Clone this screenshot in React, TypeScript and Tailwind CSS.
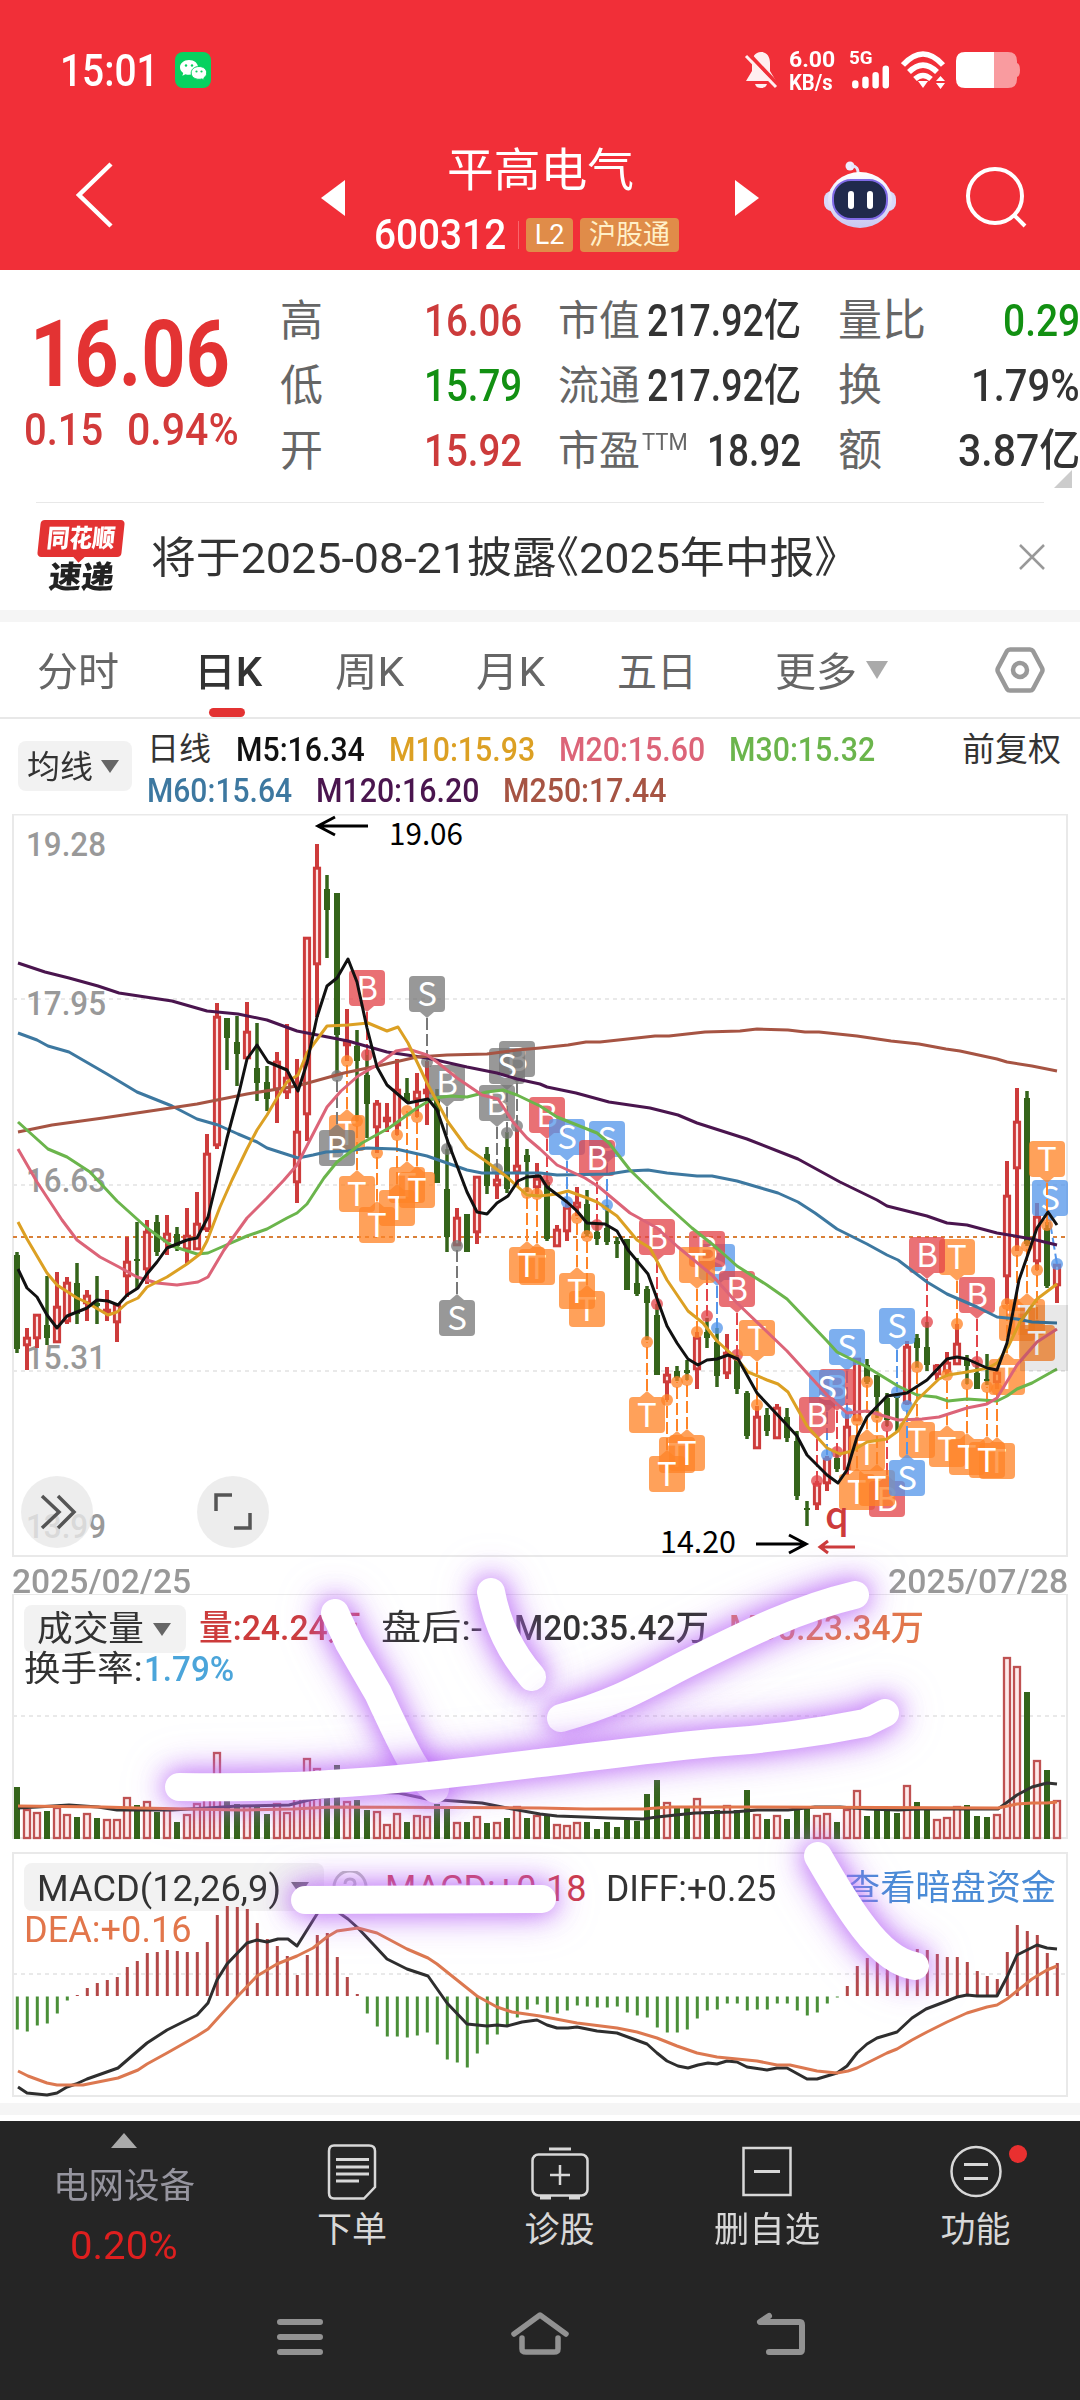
import { useLayoutEffect, useRef, type ReactNode } from "react"
import clsx from "clsx"

type Candle = [up: number, high: number, top: number, bottom: number, low: number]
type Marker = [text: string, color: string, x: number, y: number, dotY: number, dotX?: number]

const RED = "#cd3b3b"
const GREEN = "#34641a"
const PINK = "#e34449"
const BLUE = "#5596ea"
const GRAY = "#787878"
const ORANGE = "#ff8427"

const candles: Candle[] = [
  [0, 1252, 1255, 1349, 1353], [1, 1328, 1337, 1346, 1370], [1, 1314, 1314, 1339, 1348], [0, 1276, 1325, 1338, 1345],
  [1, 1272, 1306, 1343, 1343], [1, 1277, 1282, 1322, 1324], [0, 1263, 1283, 1314, 1324], [1, 1290, 1295, 1304, 1321],
  [0, 1276, 1303, 1306, 1324], [1, 1290, 1309, 1313, 1321], [1, 1304, 1304, 1323, 1342], [1, 1237, 1261, 1277, 1297],
  [0, 1222, 1259, 1261, 1288], [1, 1220, 1231, 1270, 1284], [0, 1215, 1222, 1252, 1256], [1, 1215, 1233, 1242, 1255],
  [0, 1227, 1234, 1246, 1251], [1, 1208, 1235, 1250, 1264], [1, 1192, 1223, 1250, 1250], [1, 1134, 1153, 1230, 1232],
  [1, 1003, 1016, 1146, 1149], [0, 1018, 1018, 1038, 1070], [0, 1016, 1042, 1054, 1086], [1, 1002, 1031, 1059, 1059],
  [0, 1023, 1068, 1083, 1101], [0, 1066, 1082, 1099, 1111], [1, 1052, 1061, 1090, 1123], [1, 1024, 1077, 1093, 1099],
  [1, 1059, 1131, 1183, 1203], [1, 937, 937, 1115, 1141], [1, 844, 867, 965, 1017], [0, 875, 889, 910, 958],
  [0, 893, 893, 1035, 1076], [1, 1009, 1041, 1046, 1061], [0, 1030, 1046, 1061, 1121], [0, 1050, 1075, 1104, 1138],
  [1, 1100, 1103, 1128, 1153], [1, 1103, 1117, 1122, 1132], [1, 1059, 1089, 1126, 1135], [0, 1078, 1093, 1101, 1103],
  [1, 1073, 1091, 1100, 1117], [1, 1061, 1089, 1094, 1125], [0, 1089, 1099, 1183, 1183], [0, 1149, 1189, 1237, 1252],
  [1, 1208, 1217, 1246, 1246], [0, 1214, 1214, 1252, 1252], [1, 1176, 1176, 1233, 1244], [0, 1147, 1154, 1186, 1194],
  [1, 1174, 1179, 1186, 1199], [0, 1132, 1147, 1189, 1193], [1, 1126, 1165, 1173, 1186], [0, 1149, 1155, 1162, 1192],
  [1, 1163, 1178, 1188, 1194], [0, 1180, 1182, 1239, 1241], [1, 1225, 1229, 1247, 1247], [1, 1202, 1207, 1232, 1241],
  [1, 1187, 1202, 1208, 1216], [0, 1190, 1204, 1234, 1237], [0, 1225, 1232, 1239, 1245], [0, 1205, 1228, 1242, 1245],
  [0, 1237, 1241, 1244, 1258], [0, 1239, 1239, 1290, 1290], [0, 1258, 1283, 1294, 1296], [0, 1286, 1289, 1303, 1340],
  [0, 1304, 1315, 1375, 1375], [1, 1367, 1374, 1383, 1400], [0, 1366, 1371, 1378, 1381], [0, 1360, 1370, 1373, 1380],
  [1, 1332, 1337, 1370, 1389], [0, 1318, 1332, 1338, 1348], [0, 1328, 1342, 1376, 1387], [1, 1334, 1352, 1374, 1379],
  [0, 1355, 1360, 1389, 1394], [0, 1391, 1393, 1436, 1439], [1, 1406, 1416, 1449, 1449], [0, 1408, 1415, 1431, 1436],
  [1, 1404, 1407, 1439, 1439], [0, 1408, 1417, 1438, 1442], [0, 1431, 1441, 1496, 1500], [0, 1501, 1508, 1510, 1526],
  [1, 1481, 1483, 1505, 1510], [1, 1456, 1458, 1484, 1491], [0, 1452, 1458, 1469, 1472], [1, 1413, 1426, 1470, 1475],
  [1, 1358, 1358, 1421, 1421], [0, 1359, 1365, 1382, 1384], [0, 1375, 1375, 1397, 1418], [0, 1393, 1398, 1420, 1426],
  [0, 1393, 1394, 1398, 1431], [1, 1341, 1346, 1404, 1405], [0, 1334, 1338, 1348, 1368], [0, 1322, 1347, 1365, 1371],
  [1, 1364, 1365, 1375, 1380], [1, 1352, 1362, 1372, 1375], [1, 1324, 1343, 1365, 1365], [0, 1355, 1360, 1366, 1384],
  [0, 1360, 1373, 1389, 1389], [0, 1354, 1379, 1381, 1385], [1, 1370, 1372, 1383, 1389], [1, 1161, 1195, 1277, 1304],
  [1, 1088, 1121, 1169, 1251], [0, 1091, 1098, 1244, 1246], [1, 1203, 1216, 1262, 1270], [0, 1222, 1228, 1286, 1288],
  [1, 1264, 1264, 1286, 1303],
]

const volumes = [
  52, 30, 27, 28, 32, 25, 22, 26, 21, 20, 20, 42, 34, 38, 27, 30, 17, 25, 36, 46, 87, 40, 35, 34, 33, 25, 36, 27, 46, 81,
  71, 49, 74, 38, 39, 29, 28, 15, 26, 17, 24, 23, 35, 33, 17, 17, 23, 16, 17, 21, 33, 21, 24, 24, 15, 14, 17, 17, 10, 17,
  12, 19, 18, 45, 59, 37, 32, 33, 41, 28, 29, 34, 29, 49, 25, 20, 24, 20, 30, 30, 24, 26, 17, 30, 49, 23, 30, 30, 26, 54,
  37, 31, 20, 22, 33, 34, 23, 22, 25, 182, 173, 147, 79, 69, 39,
]

const macd = [
  -33, -35, -29, -27, -17, -4, 1, 8, 13, 16, 19, 29, 35, 43, 44, 46, 45, 44, 44, 54, 81, 90, 89, 87, 73, 57, 50, 40, 21,
  41, 61, 63, 39, 19, 2, -17, -30, -40, -40, -41, -39, -36, -48, -63, -66, -71, -57, -48, -38, -29, -21, -13, -8, -16,
  -17, -14, -9, -10, -11, -11, -10, -16, -19, -21, -31, -36, -36, -33, -22, -14, -13, -7, -7, -14, -13, -13, -7, -7, -14,
  -19, -16, -7, -1, 10, 30, 38, 42, 43, 45, 46, 47, 46, 42, 39, 39, 34, 25, 20, 17, 44, 71, 65, 61, 43, 33,
]

const averages: [color: string, points: string][] = [
  ["#4a154e", "18,963 45,972 69,978 98,986 119,993 172,1001 207,1011 238,1014 267,1020 297,1031 348,1041 387,1052 427,1058 467,1067 497,1073 517,1079 540,1084 547,1087 576,1093 609,1102 650,1108 678,1115 697,1123 747,1139 798,1159 840,1182 877,1200 887,1206 927,1216 947,1223 967,1225 997,1233 1032,1239 1057,1245"],
  ["#3d78a0", "18,1033 37,1040 48,1046 69,1052 107,1074 137,1092 172,1106 197,1119 218,1125 238,1134 257,1142 267,1148 298,1158 313,1155 326,1152 348,1151 367,1148 396,1149 427,1156 467,1170 482,1173 540,1173 557,1175 609,1174 628,1171 648,1170 667,1173 697,1176 712,1176 737,1181 778,1193 798,1202 815,1213 837,1229 867,1244 887,1255 898,1260 927,1282 947,1294 977,1307 997,1317 1017,1319 1032,1322 1057,1323"],
  ["#a65443", "18,1132 52,1125 103,1118 157,1110 197,1104 247,1094 297,1086 344,1073 382,1065 417,1057 447,1055 487,1054 517,1050 540,1048 568,1045 586,1042 600,1042 655,1036 669,1036 705,1032 740,1031 757,1029 788,1030 805,1032 819,1032 857,1036 891,1041 919,1044 946,1049 960,1051 997,1059 1007,1062 1032,1066 1057,1071"],
  ["#6bb54c", "18,1122 48,1149 67,1157 90,1172 117,1201 147,1228 172,1246 197,1254 208,1253 224,1246 247,1236 267,1229 287,1218 297,1213 307,1204 324,1178 337,1162 362,1143 389,1128 417,1108 434,1098 451,1096 467,1097 487,1092 503,1090 517,1095 540,1106 557,1117 597,1133 609,1143 630,1170 662,1201 692,1228 717,1248 737,1266 767,1285 787,1299 827,1341 837,1352 867,1367 898,1386 917,1395 936,1397 948,1401 967,1399 997,1401 1007,1396 1017,1389 1032,1383 1057,1369"],
  ["#dc6478", "18,1149 37,1182 62,1220 77,1240 100,1257 119,1267 137,1277 157,1283 177,1285 198,1282 208,1277 224,1250 247,1218 267,1198 284,1180 297,1165 327,1107 341,1091 358,1076 377,1065 396,1051 408,1049 427,1055 437,1062 457,1078 482,1095 498,1099 513,1122 527,1138 540,1149 557,1165 585,1178 599,1187 630,1213 657,1228 678,1247 712,1275 737,1303 787,1351 827,1395 847,1413 867,1411 898,1420 922,1419 939,1417 967,1408 987,1404 997,1398 1017,1365 1037,1342 1057,1329"],
  ["#dca023", "18,1222 27,1239 47,1273 57,1285 77,1298 86,1302 108,1315 117,1312 127,1303 138,1298 147,1287 167,1277 187,1264 200,1254 207,1241 220,1207 232,1180 247,1149 257,1130 267,1115 277,1098 287,1082 298,1075 307,1053 327,1026 348,1025 368,1023 387,1031 398,1027 408,1043 427,1083 448,1122 467,1148 487,1162 507,1177 527,1195 540,1196 557,1194 568,1191 587,1198 597,1202 617,1216 637,1240 650,1248 667,1280 688,1311 703,1323 717,1341 737,1359 748,1372 767,1380 778,1384 788,1392 807,1426 827,1448 840,1454 852,1451 867,1442 887,1439 898,1431 917,1400 939,1379 948,1375 967,1372 988,1368 997,1363 1008,1347 1020,1322 1037,1299 1057,1284"],
  ["#111111", "18,1269 27,1288 37,1297 47,1315 57,1328 67,1316 87,1308 97,1300 108,1301 118,1305 127,1295 138,1288 147,1274 157,1262 167,1248 187,1240 197,1238 208,1217 217,1180 227,1138 238,1097 247,1059 257,1045 268,1062 287,1070 298,1091 307,1063 317,1017 327,986 337,978 348,959 357,982 367,1028 377,1067 387,1085 408,1103 428,1099 437,1110 448,1142 467,1192 477,1212 487,1214 497,1203 508,1196 518,1181 527,1177 540,1176 547,1187 567,1202 577,1211 587,1223 605,1224 617,1231 628,1250 648,1274 667,1326 677,1343 688,1359 698,1365 707,1360 717,1359 728,1355 738,1359 757,1393 787,1425 797,1436 807,1455 827,1475 838,1483 847,1470 857,1437 867,1417 887,1396 907,1393 927,1380 947,1359 957,1357 967,1359 987,1368 997,1370 1007,1343 1019,1280 1027,1257 1037,1228 1048,1212 1057,1225"],
]

const markers: Marker[] = [
  ["B", PINK, 367, 988, 1055], ["S", GRAY, 427, 994, 1062], ["B", GRAY, 447, 1083, 1149],
  ["B", GRAY, 517, 1059, 1126], ["S", GRAY, 507, 1066, 1133], ["B", GRAY, 497, 1103, 1169],
  ["T", ORANGE, 347, 1133, 1061], ["B", GRAY, 337, 1148, 1076], ["T", ORANGE, 357, 1194, 1121],
  ["T", ORANGE, 407, 1185, 1111], ["T", ORANGE, 397, 1208, 1135], ["T", ORANGE, 417, 1190, 1117],
  ["T", ORANGE, 377, 1225, 1153], ["S", GRAY, 457, 1318, 1246], ["T", ORANGE, 537, 1267, 1194],
  ["T", ORANGE, 527, 1265, 1193], ["B", PINK, 547, 1115, 1180], ["S", BLUE, 567, 1137, 1202],
  ["S", BLUE, 607, 1139, 1205], ["B", PINK, 597, 1158, 1225], ["T", ORANGE, 587, 1309, 1236],
  ["T", ORANGE, 577, 1291, 1218], ["B", PINK, 657, 1237, 1304], ["T", ORANGE, 647, 1415, 1342],
  ["T", ORANGE, 677, 1455, 1382], ["T", ORANGE, 687, 1453, 1380], ["T", ORANGE, 667, 1474, 1400],
  ["S", BLUE, 717, 1262, 1328], ["B", PINK, 707, 1249, 1316], ["T", ORANGE, 697, 1265, 1332],
  ["B", PINK, 737, 1289, 1355], ["T", ORANGE, 757, 1338, 1405], ["S", BLUE, 847, 1347, 1413],
  ["B", PINK, 837, 1387, 1452], ["S", BLUE, 827, 1388, 1455], ["B", PINK, 817, 1415, 1481],
  ["S", BLUE, 897, 1326, 1392], ["T", ORANGE, 867, 1453, 1382], ["T", ORANGE, 857, 1492, 1420],
  ["B", PINK, 887, 1499, 1426], ["T", ORANGE, 877, 1488, 1417], ["T", ORANGE, 917, 1440, 1367],
  ["S", BLUE, 907, 1478, 1406], ["T", ORANGE, 947, 1449, 1375], ["T", ORANGE, 967, 1457, 1384],
  ["T", ORANGE, 997, 1461, 1389], ["T", ORANGE, 987, 1460, 1387], ["T", ORANGE, 957, 1257, 1324],
  ["B", PINK, 927, 1255, 1322], ["B", PINK, 977, 1295, 1362], ["T", ORANGE, 1007, 1377, 1304],
  ["T", ORANGE, 1017, 1323, 1251], ["T", ORANGE, 1027, 1317, 1246], ["T", ORANGE, 1037, 1343, 1270],
  ["S", BLUE, 1050, 1198, 1264, 1057], ["T", ORANGE, 1047, 1159, 1225],
]

// Freehand strokes over the lower charts
const strokes = [
  "M335 1613 L349 1643 L378 1693 Q402 1745 412 1762 Q424 1782 435 1789",
  "M491 1592 Q500 1640 532 1677",
  "M561 1718 C620 1702 650 1682 690 1662 C750 1632 800 1608 855 1595",
  "M179 1787 Q280 1788 330 1784 C400 1780 440 1775 540 1763 C600 1756 640 1750 712 1743 Q790 1738 865 1723 L885 1713",
  "M305 1900 L542 1899",
  "M818 1856 Q846 1905 864 1928 Q890 1962 915 1966",
]

// Squeezes a run of text into a given width
function Fit({ w, className, children }: { w: number; className?: string; children: ReactNode }) {
  const ref = useRef<HTMLSpanElement>(null)
  useLayoutEffect(() => {
    const el = ref.current
    if (el) el.style.transform = `scaleX(${w / el.offsetWidth})`
  }, [w])
  return (
    <span className={clsx("block shrink-0 whitespace-nowrap", className)} style={{ width: w }}>
      <span ref={ref} className="inline-block origin-left whitespace-pre">{children}</span>
    </span>
  )
}

function Caret({ className }: { className?: string }) {
  return (
    <svg viewBox="0 0 18 13" className={clsx("h-[13px] w-[18px] shrink-0", className)}>
      <path d="M0 0H18L9 13Z" fill="currentColor" />
    </svg>
  )
}

function StatusBar() {
  return (
    <div className="flex h-[140px] items-center pr-[60px] pl-[60px] text-white">
      <Fit w={99} className="pt-[2px] text-[44px] font-medium">15:01</Fit>
      <svg viewBox="0 0 36 36" className="ml-4 size-9">
        <rect width="36" height="36" rx="8" fill="#07d160" />
        <path d="M14 8c-5.2 0-9 3.300-9 7.300 0 2.400 1.200 4.300 3.200 5.700l-.8 2.700 3-1.500c1.200.4 2.400.5 3.600.5 5.200 0 9-3.300 9-7.400S19.200 8 14 8Z" fill="#fff" />
        <path d="M24 14.500c-4.500 0-7.800 2.800-7.800 6.400s3.300 6.400 7.800 6.400c1 0 2-.1 2.900-.4l2.500 1.300-.6-2.300c1.800-1.200 2.900-3 2.900-5 0-3.600-3.200-6.400-7.700-6.400Z" fill="#fff" stroke="#07d160" />
        <g fill="#07d160">
          <circle cx="11" cy="13.500" r="1.200" /><circle cx="17" cy="13.500" r="1.200" />
          <circle cx="21.500" cy="19.500" r="1.100" /><circle cx="26.500" cy="19.500" r="1.100" />
        </g>
      </svg>
      <svg viewBox="0 0 34 38" className="ml-auto h-[38px] w-[34px]">
        <path d="M17 1c-6 0-9 5-9 11v8L2 30h30l-6-10v-8c0-6-3-11-9-11ZM11 33h12c-1 3-3 4-6 4s-5-1-6-4Z" fill="#ffeff0" />
        <path d="M3 1 34 34" stroke="#f12f38" strokeWidth="4" />
        <path d="M2 5 32 36" stroke="#ffeff0" strokeWidth="3" />
      </svg>
      <div className="ml-[11px] pt-[2px] text-[22px] leading-[23px] font-bold">
        <Fit w={46}>6.00</Fit>
        <Fit w={44}>KB/s</Fit>
      </div>
      <div className="ml-[14px] flex h-[38px] w-[44px] flex-col justify-between">
        <Fit w={24} className="text-[18px] leading-[14px] font-bold">5G</Fit>
        <svg viewBox="0 0 44 26" className="h-[26px] w-[44px]" stroke="#fff" strokeWidth="7" strokeLinecap="round">
          <path d="M5 22V20M16 22V16M27 22V11M38 22V4" />
        </svg>
      </div>
      <svg viewBox="0 0 46 38" className="ml-[8px] h-[38px] w-[46px]" fill="none" stroke="#fff" strokeWidth="5.500">
        <path d="M2 14Q22-8 42 14M8 21Q22 7 36 21M14 28Q22 21 30 28" />
        <path d="M17 30H27L22 37Z" fill="#fff" stroke="none" />
        <path d="M35 30 39.500 25 44 30ZM35 32H44L39.500 38Z" fill="#fff" stroke="none" />
      </svg>
      <svg viewBox="0 0 64 36" className="ml-[9px] h-9 w-16">
        <path d="M38 0H52Q61 0 61 9V11Q64 12 64 18T61 25V27Q61 36 52 36H38Z" fill="#f99b9f" />
        <path d="M38 0H9Q0 0 0 9V27Q0 36 9 36H38Z" fill="#fff" />
      </svg>
    </div>
  )
}

function TitleBar() {
  return (
    <div className="flex h-[130px] items-start text-white">
      <svg viewBox="0 0 40 70" className="mt-5 ml-[75px] h-[70px] w-10" fill="none" stroke="#fff" strokeWidth="4.500">
        <path d="M36 4 4 35 36 66" />
      </svg>
      <svg viewBox="0 0 24 36" className="mt-10 ml-[206px] h-9 w-6"><path d="M24 0V36L0 18Z" fill="#fff" /></svg>
      <div className="ml-[29px] flex w-[306px] flex-col">
        <Fit w={187} className="mt-[3px] ml-[73px] text-[46px] leading-[54px]">平高电气</Fit>
        <div className="mt-[19px] flex items-center">
          <Fit w={132} className="text-[42px] leading-[38px] font-medium">600312</Fit>
          <div className="ml-3 h-7 w-px bg-[#f8666c]" />
          <div className="ml-[7px] flex h-[34px] w-[47px] justify-center rounded-[4px] bg-[#e08c49] text-[27px] leading-[34px]">L2</div>
          <div className="ml-[7px] flex h-[34px] w-[99px] justify-center rounded-[4px] bg-[#e08c49] text-[27px] leading-[34px] text-[#fff0c8]">沪股通</div>
        </div>
      </div>
      <svg viewBox="0 0 24 36" className="mt-10 ml-[55px] h-9 w-6"><path d="M0 0V36L24 18Z" fill="#fff" /></svg>
      <svg viewBox="0 0 72 70" className="mt-[20px] ml-[65px] h-[70px] w-[72px]">
        <defs>
          <linearGradient id="shell" x1="0" y1="0" x2="0" y2="1">
            <stop offset="0" stopColor="#fff" />
            <stop offset="1" stopColor="#c9c8f2" />
          </linearGradient>
        </defs>
        <circle cx="26" cy="6" r="4.500" fill="#eef" />
        <path d="M27 6Q35 5 34 16" fill="none" stroke="#e4e6fb" strokeWidth="3" />
        <rect x="0" y="31" width="72" height="20" rx="8" fill="#d9d9fa" />
        <ellipse cx="36" cy="40" rx="32" ry="28" fill="url(#shell)" />
        <rect x="9" y="20" width="54" height="39" rx="18" fill="#202a4c" stroke="#7f6ae6" strokeWidth="2" />
        <path d="M27 34V46M46 34V46" stroke="#fff" strokeWidth="6" strokeLinecap="round" />
      </svg>
      <svg viewBox="0 0 62 62" className="mt-[27px] ml-[69px] size-[62px]" fill="none" stroke="#fff" strokeWidth="4">
        <circle cx="30" cy="29" r="27" />
        <path d="M49 48 60 59" />
      </svg>
    </div>
  )
}

const quoteRows = [
  { a: "高", av: "16.06", up: true, b: "市值", bv: "217.92亿", c: "量比", cv: "0.29", cw: 77 },
  { a: "低", av: "15.79", up: false, b: "流通", bv: "217.92亿", c: "换", cv: "1.79%", cw: 109 },
  { a: "开", av: "15.92", up: true, b: "市盈", bv: "18.92", c: "额", cv: "3.87亿", cw: 122 },
]

function Quote() {
  return (
    <div className="relative flex h-[232px] bg-white">
      <div className="w-[280px] shrink-0">
        <Fit w={200} className="mt-[34px] ml-[30px] text-[92px] leading-[102px] font-bold text-[#e33333]">16.06</Fit>
        <div className="mt-[4px] flex pl-6 text-[44px] leading-[40px] font-medium text-[#d23a3a]">
          <Fit w={79}>0.15</Fit>
          <Fit w={112} className="ml-6">0.94%</Fit>
        </div>
      </div>
      <div className="flex flex-1 flex-col pt-[19px] text-[44px] leading-[65px] text-[#333]">
        {quoteRows.map((r) => (
          <div key={r.a} className="flex h-[65px]">
            <span className="w-[144px] shrink-0 text-[43px] text-[#666]">{r.a}</span>
            <Fit w={98} className={clsx("font-medium", r.up ? "text-[#cc3b3b]" : "text-[#129012]")}>{r.av}</Fit>
            <span className="ml-[36px] flex w-[243px] justify-between">
              <span className="flex text-[41px] text-[#666]">
                {r.b}
                {r.b === "市盈" && <Fit w={46} className="-mt-[9px] ml-[2px] text-[23px]">TTM</Fit>}
              </span>
              <Fit w={r.b === "市盈" ? 94 : 154} className="font-medium">{r.bv}</Fit>
            </span>
            <span className="ml-[37px] text-[#666]">{r.c}</span>
            <Fit w={r.cw} className={clsx("ml-auto font-medium", r.cv === "0.29" && "text-[#129012]")}>{r.cv}</Fit>
          </div>
        ))}
      </div>
      <svg viewBox="0 0 18 18" className="absolute right-2 bottom-[14px] size-[18px]"><path d="M18 0V18H0Z" fill="#ccc" /></svg>
    </div>
  )
}

function Notice() {
  return (
    <>
      <div className="mx-9 h-px bg-[#e8e8e8]" />
      <div className="flex h-[107px] items-center bg-white pl-[37px]">
        <div className="flex w-[88px] flex-col items-center">
          <div className="relative flex h-[37px] w-[84px] -skew-x-6 items-center justify-center rounded-[4px] bg-[#e33232]">
            <Fit w={68} className="text-[25px] leading-[30px] font-black text-white">同花顺</Fit>
            <div className="absolute -bottom-[4px] left-[38px] size-2 rotate-45 bg-[#e33232]" />
          </div>
          <Fit w={65} className="mt-[5px] -skew-x-6 text-[31px] leading-[32px] font-black text-[#222]">速递</Fit>
        </div>
        <Fit w={686} className="ml-[26px] pt-[2px] text-[43px] leading-[60px] text-[#333] [font-feature-settings:'halt']">将于2025-08-21披露《2025年中报》</Fit>
        <svg viewBox="0 0 26 26" className="mr-[35px] ml-auto size-[26px]" stroke="#999" strokeWidth="2.500">
          <path d="M1 1 25 25M25 1 1 25" />
        </svg>
      </div>
      <div className="h-3 bg-[#f5f5f5]" />
    </>
  )
}

function Tabs() {
  return (
    <div className="flex h-[97px] border-b-2 border-[#e8e8e8] bg-white pl-[37px] text-[40px] leading-[101px] text-[#666]">
      <Fit w={82}>分时</Fit>
      <div className="relative ml-[75px] font-medium text-[#333]">
        <Fit w={68}>日K</Fit>
        <div className="absolute bottom-0 left-[15px] h-[9px] w-9 rounded-full bg-[#e33232]" />
      </div>
      <Fit w={69} className="ml-[73px]">周K</Fit>
      <Fit w={69} className="ml-[72px]">月K</Fit>
      <Fit w={80} className="ml-[72px]">五日</Fit>
      <Fit w={82} className="ml-[78px]">更多</Fit>
      <svg viewBox="0 0 22 18" className="mt-[39px] ml-[9px] h-[18px] w-[22px]"><path d="M0 0H22L11 18Z" fill="#aaa" /></svg>
      <svg viewBox="0 0 50 46" className="mt-[25px] mr-[35px] ml-auto h-[46px] w-[50px]" fill="none" stroke="#999" strokeWidth="4.500">
        <path d="M15 2.500H35Q37 2.500 38 4L47 21Q48 23 47 25L38 42Q37 43.500 35 43.500H15Q13 43.500 12 42L3 25Q2 23 3 21L12 4Q13 2.500 15 2.500Z" strokeLinejoin="round" />
        <circle cx="25" cy="23" r="7" />
      </svg>
    </div>
  )
}

function AverageLegend() {
  return (
    <div className="flex h-[95px] bg-white pl-[18px] font-medium">
      <div className="mt-[22px] flex h-[50px] w-[114px] items-center rounded-[8px] bg-[#f2f2f2] pl-[9px] text-[32px] font-normal text-[#333]">
        <Fit w={66} className="pt-[2px]">均线</Fit>
        <Caret className="ml-2 text-[#666]" />
      </div>
      <div className="ml-[15px] pt-[10px] text-[34px] leading-[41px]">
        <div className="flex">
          <Fit w={64} className="text-[32px] font-normal text-[#333]">日线</Fit>
          <Fit w={129} className="ml-[25px] text-[#111]">M5:16.34</Fit>
          <Fit w={146} className="ml-[24px] text-[#dca023]">M10:15.93</Fit>
          <Fit w={146} className="ml-[24px] text-[#dc6478]">M20:15.60</Fit>
          <Fit w={146} className="ml-[24px] text-[#6bb54c]">M30:15.32</Fit>
        </div>
        <div className="flex">
          <Fit w={145} className="text-[#3d78a0]">M60:15.64</Fit>
          <Fit w={163} className="ml-[24px] text-[#4a154e]">M120:16.20</Fit>
          <Fit w={163} className="ml-[24px] text-[#a65443]">M250:17.44</Fit>
        </div>
      </div>
      <Fit w={99} className="mr-[19px] ml-auto pt-[10px] text-[33px] leading-[41px] font-normal text-[#333]">前复权</Fit>
    </div>
  )
}

function Frame({ y, h, grid }: { y: number; h: number; grid: number[] }) {
  return (
    <g fill="none" stroke="#e9e9e9" strokeWidth="2">
      <rect x="13" y={y} width="1054" height={h} />
      {grid.map((g) => <path key={g} d={`M13 ${g}H1066`} strokeDasharray="4 4" />)}
    </g>
  )
}

function PriceChart() {
  return (
    <svg viewBox="0 814 1080 744" className="block h-[744px] w-[1080px] bg-white">
      <Frame y={814.5} h={741.5} grid={[999, 1185, 1371]} />
      <path d="M13 1237H1066" stroke="#d98038" strokeWidth="2" strokeDasharray="4 4" />
      <g fill="#999" fontSize="34" fontWeight="500">
        <text x="26" y="856" textLength="80" lengthAdjust="spacingAndGlyphs">19.28</text>
        <text x="26" y="1015" textLength="80" lengthAdjust="spacingAndGlyphs">17.95</text>
        <text x="26" y="1192" textLength="80" lengthAdjust="spacingAndGlyphs">16.63</text>
        <text x="26" y="1369" textLength="80" lengthAdjust="spacingAndGlyphs">15.31</text>
        <text x="26" y="1538" textLength="80" lengthAdjust="spacingAndGlyphs">13.99</text>
      </g>
      {candles.map(([up, high, top, bottom, low], i) => {
        const x = 17 + i * 10
        return up ? (
          <g key={i} stroke={RED} fill="none">
            <path d={`M${x} ${high}V${top}M${x} ${bottom}V${low}`} strokeWidth="4" />
            <rect x={x - 2.600} y={top + 1.200} width="5.200" height={Math.max(bottom - top - 2.400, 1)} strokeWidth="3" fill="#fbe3e3" />
          </g>
        ) : (
          <g key={i} fill={GREEN}>
            <rect x={x - 1.750} y={high} width="3.500" height={low - high} />
            <rect x={x - 3} y={top} width="6" height={bottom - top} />
          </g>
        )
      })}
      {markers.map(([text, color, x, y, dotY, dotX = x], i) => {
        const side = dotY > y ? 1 : -1
        return (
          <g key={i}>
            <path d={`M${x} ${y + side * 24}L${dotX} ${dotY}`} stroke={color} strokeWidth="2" strokeDasharray="12 4" />
            <g fill={color} opacity="0.76">
              <circle cx={dotX} cy={dotY} r="6" />
              <rect x={x - 18} y={y - 18} width="36" height="36" rx="4" />
              <path d={`M${x - 7} ${y + side * 18}H${x + 7}L${x} ${y + side * 24}Z`} />
            </g>
            <text x={x} y={y + 12} fill="#fff" fontSize="33" textAnchor="middle" className="font-['Noto_Sans_CJK_SC']">{text}</text>
          </g>
        )
      })}
      {averages.map(([color, points]) => (
        <polyline key={color} points={points} fill="none" stroke={color} strokeWidth="3" strokeLinejoin="round" />
      ))}
      <rect x="1020" y="1305" width="48" height="66" fill="#000" opacity="0.090" />
      <g fontSize="31" className="font-['Noto_Sans_CJK_SC']">
        <text x="389" y="845" textLength="74" lengthAdjust="spacingAndGlyphs">19.06</text>
        <text x="660" y="1553" textLength="76" lengthAdjust="spacingAndGlyphs">14.20</text>
        <text x="825" y="1529" fontSize="38" fontWeight="500" fill={RED}>q</text>
      </g>
      <g fill="none" stroke="#000" strokeWidth="3">
        <path d="M368 826H318M335 817 318 826 335 835" />
        <path d="M756 1544H806M789 1535 806 1544 789 1553" />
        <path d="M855 1547H820M828 1541 820 1547 828 1553" stroke={RED} />
      </g>
      <g fill="#e8e8e8" fillOpacity="0.800">
        <circle cx="57" cy="1512" r="36" />
        <circle cx="233" cy="1512" r="36" />
      </g>
      <g fill="none" stroke="#555" strokeWidth="3.500">
        <path d="M42 1496 59 1512 42 1528M58 1496 74 1512 58 1528" />
        <path d="M216 1511V1495H232M234 1528H250V1513" />
      </g>
    </svg>
  )
}

function VolumeChart() {
  return (
    <div className="relative">
      <svg viewBox="0 1594 1080 252" className="block h-[252px] w-[1080px]">
        <Frame y={1594} h={244} grid={[1716]} />
        {volumes.map((h, i) => {
          const x = 17 + i * 10
          return candles[i][0] ? (
            <rect key={i} x={x - 3} y={1840 - h} width="6" height={h - 2} fill="#fdeaea" stroke="#bf5252" strokeWidth="2.300" />
          ) : (
            <rect key={i} x={x - 3} y={1839 - h} width="6" height={h} fill={GREEN} />
          )
        })}
        <g fill="none" strokeWidth="3" strokeLinejoin="round">
          <polyline stroke="#333" points="18,1808 37,1807 69,1805 98,1807 117,1810 172,1810 207,1808 238,1806 289,1805 317,1798 362,1792 399,1793 427,1799 482,1803 507,1808 540,1814 557,1816 585,1817 609,1818 643,1819 657,1817 695,1813 733,1812 757,1810 788,1810 815,1807 840,1807 867,1809 898,1810 919,1809 998,1809 1017,1795 1032,1787 1047,1783 1057,1784" />
          <polyline stroke="#e2764b" points="18,1806 103,1807 138,1808 241,1810 293,1809 331,1807 540,1808 585,1809 643,1809 671,1807 747,1807 998,1808 1017,1804 1032,1803 1047,1803 1057,1802" />
        </g>
      </svg>
      <div className="absolute top-[11px] left-6 text-[35px] leading-[48px] font-medium whitespace-nowrap">
        <div className="flex">
          <div className="flex w-[162px] items-center rounded-[8px] bg-[#f2f2f2] pl-[13px] font-normal text-[#333]">
            <Fit w={107} className="pt-[2px] leading-[46px]">成交量</Fit>
            <Caret className="ml-[9px] text-[#666]" />
          </div>
          <Fit w={163} className="ml-[13px] text-[#cc3b3b]">量:24.24万</Fit>
          <Fit w={101} className="ml-[19px] font-normal text-[#333]">盘后:-</Fit>
          <Fit w={195} className="ml-[32px] text-[#333]">M20:35.42万</Fit>
          <Fit w={195} className="ml-[20px] text-[#e2764b]">M60:23.34万</Fit>
        </div>
        <div className="flex leading-[34px]">
          <Fit w={118} className="font-normal text-[#333]">换手率:</Fit>
          <Fit w={90} className="ml-[2px] text-[#4ba5da]">1.79%</Fit>
        </div>
      </div>
    </div>
  )
}

function MacdChart() {
  return (
    <div className="relative mt-[6px]">
      <svg viewBox="0 1852 1080 251" className="relative block h-[251px] w-[1080px]">
        <Frame y={1853} h={243} grid={[1974]} />
        <rect x="24" y="1863" width="300" height="48" rx="8" fill="#f2f2f2" />
        {macd.map((v, i) => (
          <rect key={i} x={15.800 + i * 10} y={v > 0 ? 1996 - v : 1996.500} width="3" height={Math.abs(v)} fill={v > 0 ? "#b34848" : "#4a8f38"} />
        ))}
        <g fill="none" strokeWidth="3" strokeLinejoin="round">
          <polyline stroke="#2e2e2e" points="18,2087 27,2093 47,2095 57,2093 67,2087 76,2084 87,2079 118,2068 147,2043 167,2030 197,2015 208,2003 217,1980 227,1964 247,1943 257,1940 267,1942 278,1939 288,1939 297,1946 317,1914 325,1902 335,1910 348,1919 358,1928 387,1959 407,1969 428,1976 447,2003 467,2024 487,2026 497,2025 507,2026 522,2022 537,2020 547,2025 557,2028 568,2028 577,2027 597,2031 617,2033 647,2044 657,2053 667,2061 678,2066 688,2068 698,2065 708,2063 717,2064 727,2061 737,2062 747,2067 767,2070 777,2068 787,2068 807,2079 817,2079 837,2073 847,2066 857,2053 867,2044 877,2038 897,2032 912,2018 926,2009 947,2001 957,1997 967,1995 977,1996 997,1996 1007,1977 1017,1955 1037,1945 1047,1948 1057,1949" />
          <polyline stroke="#dc7850" points="18,2071 28,2076 47,2083 57,2085 83,2085 118,2078 138,2070 147,2064 167,2053 197,2036 208,2029 227,2008 237,1997 257,1976 277,1964 297,1956 313,1948 327,1937 337,1931 358,1928 377,1933 407,1949 428,1958 437,1964 467,1988 477,1996 497,2007 512,2012 540,2016 577,2023 617,2028 637,2032 657,2038 677,2046 697,2053 717,2057 757,2061 777,2065 790,2065 817,2071 837,2073 848,2071 857,2068 877,2058 887,2053 897,2049 912,2040 927,2032 947,2022 967,2013 987,2007 997,2005 1007,1999 1032,1979 1047,1970 1057,1966" />
        </g>
      </svg>
      <div className="absolute top-[12px] right-[24px] left-6 text-[35px] leading-[48px] text-[#333]">
        <div className="flex items-center">
          <div className="flex w-[300px] items-center pl-[13px]">
            <Fit w={244} className="text-[37px]">MACD(12,26,9)</Fit>
            <Caret className="ml-[10px] text-[#666]" />
          </div>
          <svg viewBox="0 0 36 36" className="ml-2 size-9" fill="none" stroke="#bbb" strokeWidth="3">
            <circle cx="18" cy="16" r="16" />
            <path d="M13 13Q13 8 18 8T23 13Q22 16 18 18V21M18 23V26" />
          </svg>
          <Fit w={201} className="ml-[17px] text-[36px] text-[#cc3b4b]">MACD:+0.18</Fit>
          <Fit w={170} className="ml-[20px] text-[37px]">DIFF:+0.25</Fit>
          <Fit w={211} className="ml-auto pt-px text-[#4a8bd6]">查看暗盘资金</Fit>
        </div>
        <Fit w={168} className="text-[37px] leading-[34px] text-[#e2764b]">DEA:+0.16</Fit>
      </div>
    </div>
  )
}

function BottomBar() {
  return (
    <div className="h-[279px] bg-[#252525] text-[35px] leading-[44px] text-[#d8d8d8]">
      <div className="flex h-[150px]">
        <div className="flex w-[248px] flex-col items-center">
          <svg viewBox="0 0 26 15" className="mt-3 h-[15px] w-[26px]"><path d="M13 0 26 15H0Z" fill="#aaa" /></svg>
          <Fit w={142} className="mt-[17px] text-[#96959f]">电网设备</Fit>
          <Fit w={108} className="mt-[15px] text-[39px] text-[#de1f1f]">0.20%</Fit>
        </div>
        <div className="flex w-[208px] flex-col items-center">
          <svg viewBox="0 0 50 56" className="mt-[23px] h-[56px] w-[50px]" fill="none" stroke="currentColor" strokeWidth="2.500">
            <path d="M7 1.500H42Q48 1.500 48 7V43L37 54.500H7Q2 54.500 2 49V7Q2 1.500 7 1.500Z" />
            <path d="M9 15.500H42M9 23H42M9 30H42M9 37H32" strokeWidth="3" />
          </svg>
          <Fit w={70} className="mt-[9px]">下单</Fit>
        </div>
        <div className="flex w-[207px] flex-col items-center">
          <svg viewBox="0 0 58 56" className="mt-[23px] h-[56px] w-[58px]" fill="none" stroke="currentColor" strokeWidth="2.500">
            <path d="M18 5H40" strokeWidth="3" />
            <rect x="1.500" y="10.500" width="55" height="41" rx="6" />
            <path d="M19 31H39M29 21V41" />
            <path d="M9 53.500H20M38 53.500H49" strokeWidth="4" />
          </svg>
          <Fit w={70} className="mt-[9px]">诊股</Fit>
        </div>
        <div className="flex w-[208px] flex-col items-center">
          <svg viewBox="0 0 50 56" className="mt-[23px] h-[56px] w-[50px]" fill="none" stroke="currentColor" strokeWidth="2.500">
            <rect x="1.500" y="4" width="47" height="47" />
            <path d="M12 27.500H38" strokeWidth="3" />
          </svg>
          <Fit w={106} className="mt-[9px]">删自选</Fit>
        </div>
        <div className="relative flex w-[209px] flex-col items-center">
          <svg viewBox="0 0 54 56" className="mt-[23px] h-[56px] w-[54px]" fill="none" stroke="currentColor" strokeWidth="2.500">
            <circle cx="27" cy="27.500" r="24.500" />
            <path d="M15 20.500H39M15 34.500H39" strokeWidth="3" />
          </svg>
          <Fit w={70} className="mt-[9px]">功能</Fit>
          <div className="absolute top-6 right-[53px] size-[18px] rounded-full bg-[#e93030]" />
        </div>
      </div>
      <div className="flex justify-center gap-[186px] pt-[39px] pl-[2px]">
        <svg viewBox="0 0 48 54" className="h-[54px] w-12" stroke="#929292" strokeWidth="6" strokeLinecap="round">
          <path d="M4 12H44M4 27H44M4 42H44" />
        </svg>
        <svg viewBox="0 0 60 54" className="h-[54px] w-[60px]" fill="none" stroke="#929292" strokeWidth="5.500" strokeLinecap="round" strokeLinejoin="round">
          <path d="M4 24 30 5 56 24M12 28V39Q12 42 16 42H44Q48 42 48 39V28" />
        </svg>
        <svg viewBox="0 0 50 54" className="h-[54px] w-[50px]" fill="none" stroke="#929292" strokeWidth="6" strokeLinecap="round" strokeLinejoin="round">
          <path d="M13 6 4 12H44Q46 12 46 15V39Q46 42 44 42H13" />
        </svg>
      </div>
    </div>
  )
}

export default function App() {
  return (
    <div className="relative h-[2400px] w-[1080px] overflow-hidden bg-white font-[Roboto,'Noto_Sans_CJK_SC',sans-serif]">
      <div className="bg-[#f12f38]">
        <StatusBar />
        <TitleBar />
      </div>
      <Quote />
      <Notice />
      <Tabs />
      <AverageLegend />
      <PriceChart />
      <div className="flex h-[36px] justify-between px-[12px] text-[34px] leading-[47px] font-medium text-[#999]">
        <Fit w={179}>2025/02/25</Fit>
        <Fit w={180}>2025/07/28</Fit>
      </div>
      <VolumeChart />
      <MacdChart />
      <div className="mb-[6px] h-3 bg-[#f5f5f5]" />
      <BottomBar />
      {/* Marker pen overlay */}
      <svg viewBox="0 1480 1080 640" className="pointer-events-none absolute top-[1480px] left-0 h-[640px] w-[1080px]" fill="none">
        {strokes.map((d) => (
          <path
            key={d}
            d={d}
            stroke="#fff"
            strokeWidth="28"
            strokeLinecap="round"
            strokeLinejoin="round"
            className="[filter:drop-shadow(0_0_11px_#b866f5b0)_drop-shadow(0_0_17px_#b866f5a0)]"
          />
        ))}
      </svg>
    </div>
  )
}
